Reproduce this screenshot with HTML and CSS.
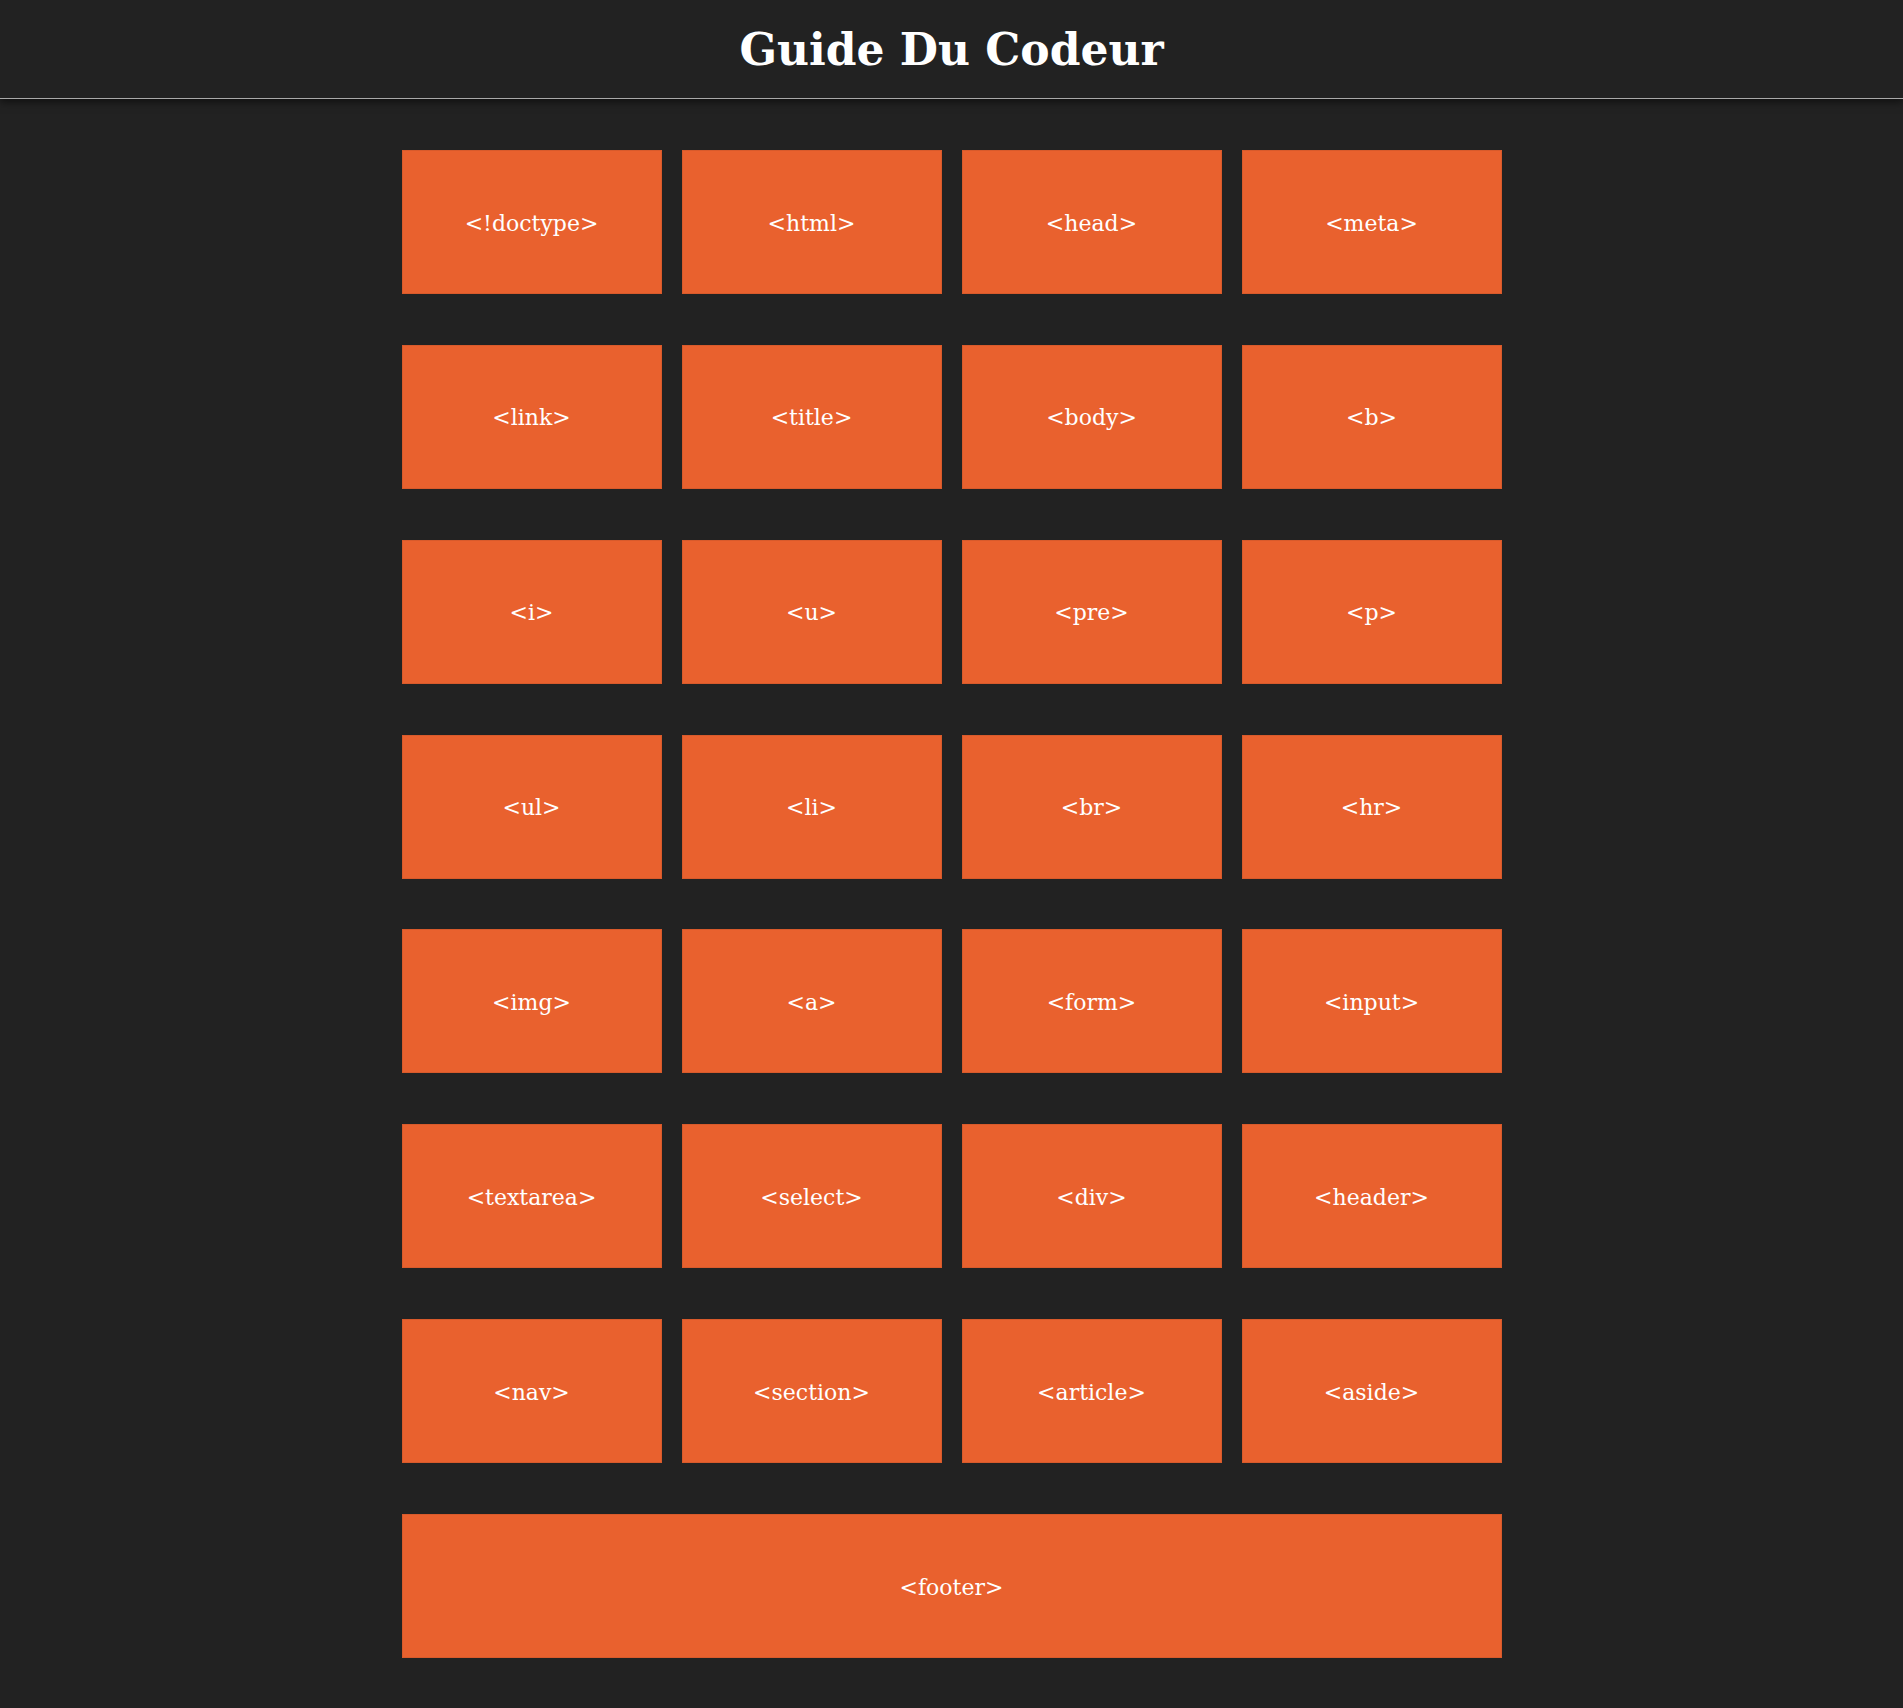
FILE: index.html
```html
<!DOCTYPE html>
<html lang="fr">
<head>
<meta charset="utf-8">
<title>Guide Du Codeur</title>
<link rel="stylesheet" href="styles.css">
</head>
<body>
<header class="site-header">
  <h1 class="site-title">Guide Du Codeur</h1>
</header>
<main class="grid">
  <div class="tag">&lt;!doctype&gt;</div>
  <div class="tag">&lt;html&gt;</div>
  <div class="tag">&lt;head&gt;</div>
  <div class="tag">&lt;meta&gt;</div>
  <div class="tag">&lt;link&gt;</div>
  <div class="tag">&lt;title&gt;</div>
  <div class="tag">&lt;body&gt;</div>
  <div class="tag">&lt;b&gt;</div>
  <div class="tag">&lt;i&gt;</div>
  <div class="tag">&lt;u&gt;</div>
  <div class="tag">&lt;pre&gt;</div>
  <div class="tag">&lt;p&gt;</div>
  <div class="tag">&lt;ul&gt;</div>
  <div class="tag">&lt;li&gt;</div>
  <div class="tag">&lt;br&gt;</div>
  <div class="tag">&lt;hr&gt;</div>
  <div class="tag">&lt;img&gt;</div>
  <div class="tag">&lt;a&gt;</div>
  <div class="tag">&lt;form&gt;</div>
  <div class="tag">&lt;input&gt;</div>
  <div class="tag">&lt;textarea&gt;</div>
  <div class="tag">&lt;select&gt;</div>
  <div class="tag">&lt;div&gt;</div>
  <div class="tag">&lt;header&gt;</div>
  <div class="tag">&lt;nav&gt;</div>
  <div class="tag">&lt;section&gt;</div>
  <div class="tag">&lt;article&gt;</div>
  <div class="tag">&lt;aside&gt;</div>
  <div class="tag tag-wide">&lt;footer&gt;</div>
</main>
</body>
</html>
```
FILE: styles.css
```css
html, body {
  margin: 0;
  padding: 0;
  background: #222222;
}
body {
  font-family: "DejaVu Serif", "Liberation Serif", serif;
  color: #ffffff;
}
.site-header {
  height: 97px;
  padding-top: 1px;
  border-bottom: 1px solid #a9a9a9;
  box-shadow: 0 3px 8px rgba(0, 0, 0, 0.55);
  display: flex;
  align-items: center;
  justify-content: center;
  position: relative;
}
.site-title {
  margin: 0;
  font-size: 44px;
  font-weight: bold;
}
.grid {
  width: 1100px;
  margin: 51px auto 0;
  padding-bottom: 50px;
  display: grid;
  grid-template-columns: repeat(4, 260px);
  column-gap: 20px;
  row-gap: 50.86px;
  grid-auto-rows: 144px;
}
.tag {
  background: #e9612e;
  box-shadow: inset 0 0 0 1px #d85a2b;
  display: flex;
  align-items: center;
  justify-content: center;
  padding-top: 2px;
  font-size: 22px;
}
.tag-wide {
  grid-column: 1 / -1;
}
```
